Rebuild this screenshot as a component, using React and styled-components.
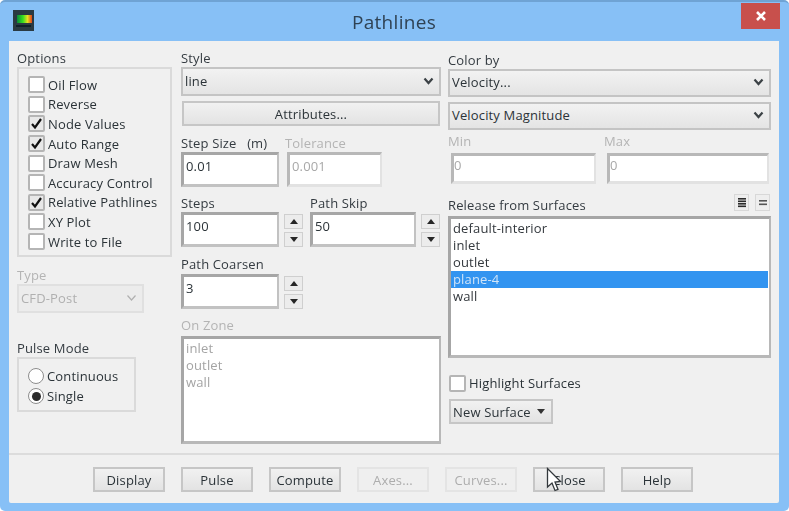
import styled, { createGlobalStyle } from "styled-components";

const GlobalStyle = createGlobalStyle`
    html, body {
        margin: 0;
        padding: 0;
        background: #ffffff;
    }
    * {
        box-sizing: border-box;
    }
`

const fontStack = `"Open Sans", "Noto Sans", "Liberation Sans", sans-serif`

//component styles
const Window = styled.div`
    position: relative;
    width: 789px;
    height: 511px;
    overflow: hidden;
    display: flex;
    flex-direction: column;
    padding: 0 10px 8px 9px;
    background: #87c0f6;
    border-top: 2px solid #6fa3d4;
    border-radius: 5px;
    font-family: ${fontStack};
    font-size: 13px;
    letter-spacing: 0.15px;
    color: #2b3338;
    filter: blur(0.7px);
`

const TitleBar = styled.div`
    height: 39px;
    display: flex;
    align-items: center;
    justify-content: center;
    font-size: 19px;
    letter-spacing: 0.3px;
    color: #2f4254;
`

const AppIcon = styled.svg`
    position: absolute;
    left: 13px;
    top: 8px;
`

const CloseX = styled.div`
    position: absolute;
    left: 741px;
    top: 1px;
    width: 39px;
    height: 26px;
    background: #c8504c;
    color: #fff;
    display: flex;
    align-items: center;
    justify-content: center;
`

const Body = styled.div`
    flex: 1;
    display: flex;
    flex-direction: column;
    background: #f0f0f0;
    border-radius: 0 0 2px 2px;
`

const Main = styled.div`
    height: 414px;
    display: flex;
    padding: 8px 8px 0 8px;
    border-bottom: 2px solid #dcdcdc;
`

const Column = styled.div`
    width: ${props => props.$width}px;
    margin-right: ${props => props.$gap || 0}px;
    display: flex;
    flex-direction: column;
    align-items: flex-start;
`

const Label = styled.div`
    height: ${props => props.$height || 18}px;
    margin-top: ${props => props.$top || 0}px;
    margin-left: ${props => props.$left || 0}px;
    line-height: 18px;
    white-space: nowrap;
    color: ${props => props.$disabled ? '#b4b4b4' : '#343b41'};
`

const GroupBox = styled.div`
    width: ${props => props.$width}px;
    height: ${props => props.$height}px;
    padding: ${props => props.$pad || 6}px 0 0 9px;
    border: 2px solid #dadada;
`

const CheckRow = styled.div`
    height: ${props => props.$height || 19.6}px;
    display: flex;
    align-items: center;
    gap: 3px;
    margin-top: ${props => props.$top || 0}px;
    margin-left: ${props => props.$left || 0}px;
    white-space: nowrap;
`

const CheckBox = styled.span`
    width: 17px;
    height: 17px;
    flex: none;
    display: flex;
    align-items: center;
    justify-content: center;
    background: ${props => props.$checked ? '#e8e8e8' : '#ffffff'};
    border: 2px solid #b5b5b5;
    border-radius: 2px;
`

const RadioDot = styled.span`
    width: 16px;
    height: 16px;
    flex: none;
    border-radius: 50%;
    background: #fff;
    border: 1.5px solid #8d8d8d;
    display: flex;
    align-items: center;
    justify-content: center;

    &::after {
        content: '';
        width: 9px;
        height: 9px;
        border-radius: 50%;
        background: ${props => props.$on ? '#2b2b2b' : 'transparent'};
    }
`

const SelectBox = styled.div`
    width: ${props => props.$width || '100%'};
    height: ${props => props.$height || 29}px;
    margin-top: ${props => props.$top || 0}px;
    display: flex;
    align-items: center;
    justify-content: space-between;
    padding: 0 5px 2px 2px;
    border: 2px solid ${props => props.$disabled ? '#e0e0e0' : '#c4c4c4'};
    background: ${props => props.$disabled ? '#ececec' : 'linear-gradient(#f2f2f2, #e4e4e4)'};
    color: ${props => props.$disabled ? '#b0b0b0' : '#2b3338'};
`

const PushButton = styled.div`
    width: ${props => props.$width}px;
    height: 25px;
    margin-top: ${props => props.$top || 0}px;
    margin-left: ${props => props.$left || 0}px;
    display: flex;
    align-items: center;
    justify-content: ${props => props.$menu ? 'flex-start' : 'center'};
    padding-left: ${props => props.$menu ? 2 : 0}px;
    gap: 6px;
    flex: none;
    border: 2px solid ${props => props.$disabled ? '#e4e4e4' : '#c6c6c6'};
    background: ${props => props.$disabled ? '#efefef' : 'linear-gradient(#f1f1f1, #e3e3e3)'};
    color: ${props => props.$disabled ? '#adadad' : '#2b3338'};
`

const Row = styled.div`
    display: flex;
    align-items: flex-start;
    margin-left: ${props => props.$left || 0}px;
`

const Field = styled.div`
    width: ${props => props.$width}px;
    margin-right: ${props => props.$gap || 0}px;
    flex: none;
`

const TextField = styled.div`
    width: ${props => props.$width}px;
    height: ${props => props.$height || 35}px;
    flex: none;
    padding: ${props => props.$compact ? '0 0 0 0' : '2px 0 0 2px'};
    line-height: 18px;
    background: #fff;
    border-style: solid;
    border-width: 3px 2px 3px 3px;
    border-color: ${props => props.$disabled
        ? '#b8b8b8 #e2e2e2 #e2e2e2 #b8b8b8'
        : '#a6a6a6 #c2c2c2 #c2c2c2 #a6a6a6'};
    color: ${props => props.$disabled ? '#a8a8a8' : '#2b3338'};
`

const Spinner = styled.div`
    width: 19px;
    height: 33px;
    margin: 2px 0 0 5px;
    flex: none;
    display: flex;
    flex-direction: column;
    justify-content: space-between;
`

const SpinButton = styled.div`
    height: 15px;
    display: flex;
    align-items: center;
    justify-content: center;
    background: #ececec;
    border: 1px solid #cfcfcf;

    &::after {
        content: '';
        border-left: 4px solid transparent;
        border-right: 4px solid transparent;
        border-${props => props.$up ? 'bottom' : 'top'}: 5px solid #262626;
    }
`

const ListBox = styled.div`
    width: 100%;
    height: ${props => props.$height}px;
    padding: 1px 1px 0 0;
    background: #fff;
    border-style: solid;
    border-width: 3px 2px 3px 3px;
    border-color: #a6a6a6 #b8b8b8 #b8b8b8 #a6a6a6;
`

const ListItem = styled.div`
    height: 17px;
    line-height: 17px;
    padding-left: 2px;
    background: ${props => props.$selected ? '#3294f0' : 'transparent'};
    color: ${props => props.$selected ? '#cfe4f8' : props.$disabled ? '#a4a4a4' : '#33383d'};
`

const SurfaceHeader = styled.div`
    width: 100%;
    height: 20px;
    margin-top: 12px;
    display: flex;
    justify-content: space-between;
    align-items: flex-start;
`

const MiniButtons = styled.div`
    display: flex;
    gap: 6px;
    padding-right: 1px;
    margin-top: -2px;
`

const MiniButton = styled.div`
    width: 15px;
    height: 17px;
    display: flex;
    align-items: center;
    justify-content: center;
    border: 1px solid #d8d8d8;
    background: #eeeeee;
`

const Caret = styled.span`
    width: 0;
    height: 0;
    border-left: 4px solid transparent;
    border-right: 4px solid transparent;
    border-top: 5px solid #333;
`

const Footer = styled.div`
    flex: 1;
    display: flex;
    gap: 16px;
    padding: 12px 0 0 84px;
    align-items: flex-start;
`

const Cursor = styled.svg`
    position: absolute;
    left: 546px;
    top: 465px;
`

const Chevron = ({ thin }) => (
    <svg width="11" height="8" viewBox="0 0 11 8">
        <path d="M1.5 1.5 L5.5 6 L9.5 1.5" fill="none" stroke={thin ? '#b0b0b0' : '#3c4246'} strokeWidth={thin ? 1.2 : 2.2} />
    </svg>
)

const Tick = () => (
    <svg width="13" height="13" viewBox="0 0 13 13">
        <path d="M2 7 L5 10.5 L11 2" fill="none" stroke="#111" strokeWidth="2.2" />
    </svg>
)

const Lines = ({ bars, color }) => (
    <svg width="10" height="11" viewBox="0 0 10 11">
        {bars.map(y => <rect key={y} x="1" y={y} width="8" height="1.6" fill={color} />)}
    </svg>
)

const options = [
    ['Oil Flow', false],
    ['Reverse', false],
    ['Node Values', true],
    ['Auto Range', true],
    ['Draw Mesh', false],
    ['Accuracy Control', false],
    ['Relative Pathlines', true],
    ['XY Plot', false],
    ['Write to File', false],
]

const surfaces = ['default-interior', 'inlet', 'outlet', 'plane-4', 'wall']
const zones = ['inlet', 'outlet', 'wall']
const actions = [
    ['Display'], ['Pulse'], ['Compute'], ['Axes...', true], ['Curves...', true], ['Close'], ['Help'],
]

export default function App() {
    return <>
        <GlobalStyle />
        <Window>
            <AppIcon width="21" height="21" viewBox="0 0 21 21">
                <defs>
                    <linearGradient id="rainbow" x1="0" x2="1" y1="0" y2="0">
                        <stop offset="0" stopColor="#0a8a3a" />
                        <stop offset="0.4" stopColor="#35e020" />
                        <stop offset="0.7" stopColor="#e8e020" />
                        <stop offset="1" stopColor="#e0401c" />
                    </linearGradient>
                </defs>
                <rect width="21" height="21" fill="#2a3a42" />
                <rect x="4" y="5" width="15" height="8" fill="url(#rainbow)" />
                <rect x="3" y="15" width="15" height="2" fill="#10202a" />
            </AppIcon>
            <TitleBar>Pathlines</TitleBar>
            <CloseX>
                <svg width="12" height="12" viewBox="0 0 12 12">
                    <path d="M2 2 L10 10 M10 2 L2 10" stroke="#fff" strokeWidth="2.6" />
                </svg>
            </CloseX>
            <Body>
                <Main>
                    <Column $width={155} $gap={9}>
                        <Label>Options</Label>
                        <GroupBox $width={155} $height={190}>
                            {options.map(([name, checked]) => (
                                <CheckRow key={name}>
                                    <CheckBox $checked={checked}>{checked && <Tick />}</CheckBox>
                                    {name}
                                </CheckRow>
                            ))}
                        </GroupBox>
                        <Label $top={9} $disabled>Type</Label>
                        <SelectBox $width="127px" $disabled>CFD-Post <Chevron thin /></SelectBox>
                        <Label $top={26}>Pulse Mode</Label>
                        <GroupBox $width={119} $height={55} $pad={7}>
                            <CheckRow $height={20}><RadioDot />Continuous</CheckRow>
                            <CheckRow $height={20}><RadioDot $on />Single</CheckRow>
                        </GroupBox>
                    </Column>

                    <Column $width={260} $gap={7}>
                        <Label>Style</Label>
                        <SelectBox>line <Chevron /></SelectBox>
                        <PushButton $width={258} $top={5} $left={1}>Attributes...</PushButton>
                        <Row>
                            <Field $width={106}>
                                <Label $top={8}>Step Size&nbsp;&nbsp;&nbsp;(m)</Label>
                                <TextField $width={98}>0.01</TextField>
                            </Field>
                            <Field $width={95}>
                                <Label $top={8} $left={-2} $disabled>Tolerance</Label>
                                <TextField $width={95} $disabled>0.001</TextField>
                            </Field>
                        </Row>
                        <Row>
                            <Field $width={129}>
                                <Label $top={7}>Steps</Label>
                                <Row>
                                    <TextField $width={98}>100</TextField>
                                    <Spinner><SpinButton $up /><SpinButton /></Spinner>
                                </Row>
                            </Field>
                            <Field $width={131}>
                                <Label $top={7}>Path Skip</Label>
                                <Row>
                                    <TextField $width={106}>50</TextField>
                                    <Spinner><SpinButton $up /><SpinButton /></Spinner>
                                </Row>
                            </Field>
                        </Row>
                        <Label $top={8} $height={19}>Path Coarsen</Label>
                        <Row>
                            <TextField $width={98}>3</TextField>
                            <Spinner><SpinButton $up /><SpinButton /></Spinner>
                        </Row>
                        <Label $top={7} $height={20} $disabled>On Zone</Label>
                        <ListBox $height={108}>
                            {zones.map(zone => <ListItem key={zone} $disabled>{zone}</ListItem>)}
                        </ListBox>
                    </Column>

                    <Column $width={323}>
                        <Label $top={2}>Color by</Label>
                        <SelectBox $height={28}>Velocity... <Chevron /></SelectBox>
                        <SelectBox $height={28} $top={5}>Velocity Magnitude <Chevron /></SelectBox>
                        <Row $left={3}>
                            <Field $width={156}>
                                <Label $top={2} $left={-3} $height={21} $disabled>Min</Label>
                                <TextField $width={145} $height={31} $compact $disabled>0</TextField>
                            </Field>
                            <Field $width={162}>
                                <Label $top={2} $left={-3} $height={21} $disabled>Max</Label>
                                <TextField $width={162} $height={31} $compact $disabled>0</TextField>
                            </Field>
                        </Row>
                        <SurfaceHeader>
                            <Label $height={20}>Release from Surfaces</Label>
                            <MiniButtons>
                                <MiniButton><Lines bars={[1, 3.5, 6, 8.5]} color="#2c2c2c" /></MiniButton>
                                <MiniButton><Lines bars={[3, 6.5]} color="#555" /></MiniButton>
                            </MiniButtons>
                        </SurfaceHeader>
                        <ListBox $height={142}>
                            {surfaces.map(surface => (
                                <ListItem key={surface} $selected={surface === 'plane-4'}>{surface}</ListItem>
                            ))}
                        </ListBox>
                        <CheckRow $height={18} $top={16} $left={1}>
                            <CheckBox />
                            Highlight Surfaces
                        </CheckRow>
                        <PushButton $width={104} $top={7} $left={1} $menu>New Surface <Caret /></PushButton>
                    </Column>
                </Main>
                <Footer>
                    {actions.map(([name, disabled]) => (
                        <PushButton key={name} $width={72} $disabled={disabled}>{name}</PushButton>
                    ))}
                </Footer>
            </Body>
            <Cursor width="16" height="26" viewBox="0 0 16 26">
                <path d="M1.5 1.5 L1.5 20 L6 16 L9 23.5 L12 22.3 L9 15 L14.5 14.5 Z" fill="#fff" stroke="#33383c" strokeWidth="1.3" />
            </Cursor>
        </Window>
    </>
}
